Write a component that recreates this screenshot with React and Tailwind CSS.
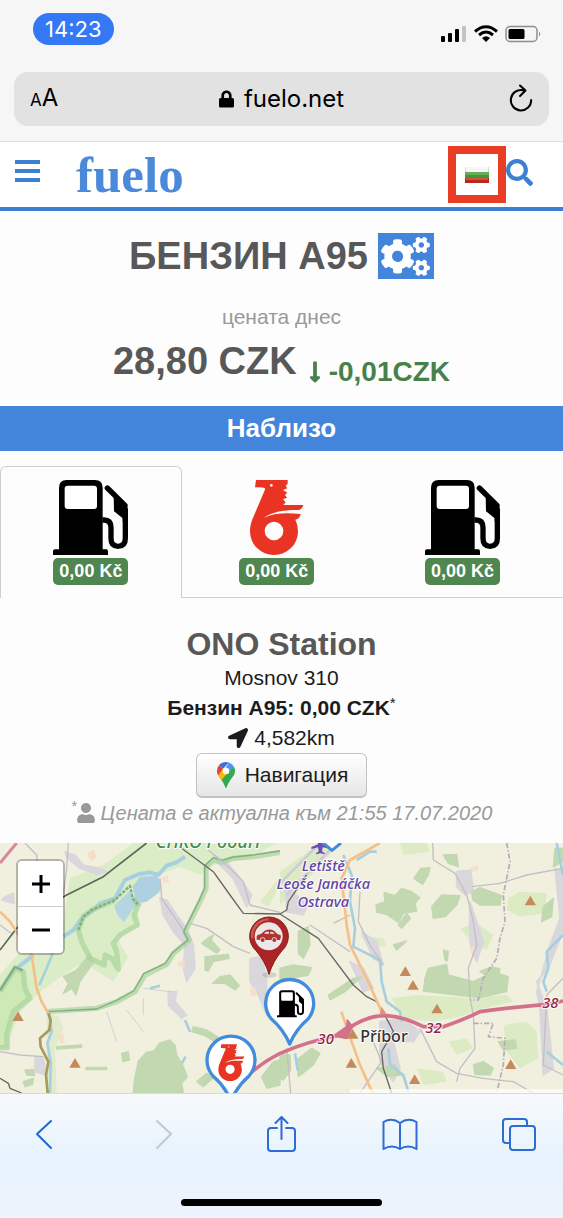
import { FaCogs, FaLocationArrow, FaLock, FaLongArrowAltDown, FaSearch, FaUser } from "react-icons/fa";

const stations = [
  { id: 1, logo: "pump", price: "0,00 Kč" },
  { id: 2, logo: "benzina", price: "0,00 Kč" },
  { id: 3, logo: "pump", price: "0,00 Kč" },
];

const peaks = [
  [54, 545], [225, 685], [1216, 410], [1239, 451], [1311, 522], [1591, 198],
  [1058, 598], [1054, 685], [1244, 734], [1532, 689],
];

const forests = [
  "M400 774L403 735 415 678 440 652 462 648 478 625 510 615 525 630 530 660 548 690 562 725 545 745 550 774Z",
  "M1128 210L1155 200 1152 172 1185 182 1205 160 1235 170 1260 188 1245 205 1250 228 1210 235 1195 262 1160 238 1130 232Z",
  "M1242 130L1262 100 1290 98 1285 120 1268 148Z",
  "M1295 215L1325 180 1380 182 1370 210 1335 245 1300 250Z",
  "M1275 430L1285 400 1340 388 1345 420 1420 440 1480 410 1525 425 1520 470 1440 488 1350 478 1270 468Z",
  "M1415 170L1440 158 1505 182 1500 210 1440 210 1418 195Z",
  "M1195 270L1220 235 1232 250 1205 280Z",
  "M840 400L880 390 935 398 925 420 860 432 840 430Z",
  "M895 290L925 275 930 330 910 370 895 355Z",
  "M1630 215L1660 190 1655 245 1625 260Z",
  "M1330 60L1370 58 1375 95 1345 85Z",
  "M890 675L935 640 960 655 940 690 895 725Z",
  "M840 655L870 660 872 705 850 735 840 730Z",
  "M1420 690L1450 680 1480 700 1470 720 1425 718Z",
  "M1130 700L1185 690 1205 720 1160 724Z",
  "M1495 620L1545 615 1550 640 1510 645Z",
  "M785 725L820 680 840 675 840 750 800 760Z",
  "M190 475L205 445 190 425 230 405 270 355 282 380 240 440 228 480 215 460Z",
  "M615 365L685 358 688 370 640 380 625 408 615 405Z",
  "M638 445L660 425 690 420 718 452 705 465 675 445Z",
  "M605 325L625 308 640 300 634 315 660 345 650 355Z",
  "M365 655L385 650 388 675 368 680Z",
  "M75 705L100 703 105 722 80 720ZM70 740L100 730 98 748 75 755Z",
  "M580 575L620 585 660 610 650 622 610 600 575 590Z",
  "M640 655L680 640 650 680ZM590 740L620 715 640 728 610 755Z",
  "M258 697L320 697 320 704 258 704ZM170 635L245 630 245 637 170 642Z",
  "M1665 40L1689 40 1689 80 1660 95Z",
  "M1440 410L1475 395 1500 402 1490 440Z",
  "M985 480L1060 430 1085 425 1035 470 990 495Z",
  "M1180 330L1220 318 1190 345ZM1330 345L1345 350 1342 378 1335 375Z",
];

const meadows = [
  "M1175 490L1250 480 1400 488 1520 480 1540 500 1450 520 1380 545 1300 560 1210 550Z",
  "M1525 190L1560 170 1640 175 1635 235 1560 245 1520 225Z",
  "M1510 570L1580 560 1610 590 1615 670 1560 700 1520 650Z",
  "M1380 280L1430 265 1480 300 1460 345 1420 330Z",
  "M1200 24L1280 24 1290 50 1210 60Z",
  "M1080 300L1150 310 1160 335 1100 330Z",
  "M780 200L840 125 840 150 805 215Z",
  "M1250 700L1330 710 1340 740 1270 750Z",
  "M1345 620L1400 610 1420 640 1370 660Z",
  "M840 110L960 24 1020 24 900 160 840 210Z",
];

const towns = [
  "M195 50L225 60 250 90 300 100 320 110 290 118 240 100 200 68Z",
  "M480 190L500 195 530 240 560 280 580 330 585 400 560 440 550 400 555 330 520 290 490 240Z",
  "M505 470L530 470 525 500 560 540 545 550 505 510Z",
  "M640 60L680 80 720 130 755 180 740 215 700 130 660 90Z",
  "M750 370L785 365 800 430 800 540 775 480 750 440Z",
  "M855 150L900 190 930 190 910 240 860 230Z",
  "M1370 110L1412 105 1420 170 1395 180 1370 155Z",
  "M1410 200L1430 260 1450 320 1430 380 1412 340 1408 270Z",
  "M1665 100L1689 110 1689 290 1645 400 1610 440 1640 520 1660 700 1630 720 1620 520 1610 470 1650 330 1680 250Z",
  "M1140 560L1210 550 1260 590 1240 620 1180 620 1200 700 1180 740 1140 680Z",
  "M1085 290L1130 320 1150 390 1120 370Z",
  "M1050 380L1090 400 1120 460 1090 470Z",
  "M15 185L40 175 42 205 5 195ZM105 665L130 670 140 720 105 710Z",
];

const Pump = () => (
  <>
    <path d="M162 300V288Q162 283 168 283H180V98Q180 75 203 75H288Q311 75 311 98V283H322Q327 283 327 290V300Z" />
    <rect x="197" y="92" width="97" height="70" rx="9" fill="#fff" />
    <path d="M310 195H315Q336 195 336 218V250Q336 274 357 274Q379 274 379 250V165" fill="none" stroke="#000" strokeWidth="16" />
    <path d="M325 99L378 151" stroke="#000" strokeWidth="16" strokeLinecap="round" />
    <path d="M344 118L379 147Q387 153 387 162V200H371V190L345 169Z" />
  </>
);

const Rooster = () => (
  <>
    <path
      fillRule="evenodd"
      d="M768 75H863V86L857 92 862 100 849 105 862 113 855 120 861 128 849 133 857 142 850 150H910Q907 162 897 165C855 164 815 170 791 189C820 174 858 173 902 177Q899 192 886 194Q894 209 894 229A72 71 0 0 1 750 229Q750 207 761 184L796 101Q790 96 765 97ZM794 228A28 28 0 1 0 850 228A28 28 0 1 0 794 228Z"
      fill="#e93323"
    />
    <circle cx="814" cy="91" r="4" fill="#fff" />
  </>
);

const StationLogo = ({ type }) =>
  type === "pump" ? (
    <svg viewBox="162 75 225 225" className="h-[75px] w-[75px]" aria-hidden="true">
      <Pump />
    </svg>
  ) : (
    <svg viewBox="717 75 225 225" className="h-[75px] w-[75px]" aria-hidden="true">
      <Rooster />
    </svg>
  );

const StatusBar = () => (
  <div className="flex h-[58px] items-start justify-between pl-[33px] pr-[21px] pt-[13px]">
    <span className="rounded-full bg-[#3478f6] px-3 text-[22px] leading-8 text-white">14:23</span>
    <svg viewBox="0 0 101 20" className="mt-3 h-5 w-[101px]" aria-hidden="true">
      <rect x="0" y="11" width="4" height="6" rx="1" />
      <rect x="7" y="8" width="4" height="9" rx="1" />
      <rect x="14" y="4" width="4" height="13" rx="1" />
      <rect x="21" y="1" width="4" height="16" rx="1" fill="#c4c4c4" />
      <path d="M34 6.500Q45 -3 56 6.500M38 10Q45 4 52 10" fill="none" stroke="#000" strokeWidth="3" />
      <path d="M41 13Q45 9.500 49 13L45 17Z" />
      <rect x="65" y="1.500" width="31" height="15" rx="4" fill="none" stroke="#8d8d8d" strokeWidth="1.500" />
      <rect x="67.500" y="4" width="16" height="10" rx="1.500" />
      <path d="M98 6.500Q100.500 9 98 11.500Z" fill="#8d8d8d" />
    </svg>
  </div>
);

const AddressBar = () => (
  <div className="mx-[14px] mt-[14px] flex h-[54px] items-center justify-between rounded-[14px] bg-[#e2e2e3] px-4">
    <button type="button" aria-label="Text size" className="w-8 text-left leading-8">
      <span className="text-[17px]">A</span>
      <span className="text-[24px]">A</span>
    </button>
    <div className="flex items-center gap-[10px] text-[24px] leading-8">
      <FaLock className="h-5 w-[15px]" />
      <span>fuelo.net</span>
    </div>
    <button type="button" aria-label="Reload" className="flex w-8 justify-end">
      <svg viewBox="0 0 24 30" className="h-[30px] w-6" fill="none" stroke="#000" strokeWidth="2" strokeLinecap="round" strokeLinejoin="round">
        <path d="M14 6.200A10.200 10.200 0 1 0 22.200 16M11 1.500L16.500 6.500 11 12" />
      </svg>
    </button>
  </div>
);

const Header = () => (
  <header className="flex h-[69px] items-center border-b-4 border-[#3f7fd2] bg-white pl-[15px] pr-[30px]">
    <button type="button" aria-label="Menu" className="mb-2 flex w-[25px] flex-col gap-[5px]">
      <span className="h-1 bg-[#3d7fd0]" />
      <span className="h-1 bg-[#3d7fd0]" />
      <span className="h-1 bg-[#3d7fd0]" />
    </button>
    <a href="#home" className="ml-9 font-['Liberation_Serif',serif] text-[51px] font-bold leading-[60px] text-[#4a8ad8]">
      fuelo
    </a>
    <button type="button" aria-label="Език" className="ml-auto flex h-[57px] w-[58px] items-center justify-center border-8 border-[#e93e25]">
      <svg viewBox="0 0 24 16" className="h-4 w-6" aria-hidden="true">
        <rect width="24" height="16" fill="#d8d8d8" />
        <rect x="1" width="22" height="6" fill="#f7f7f7" />
        <rect y="5" width="24" height="6" fill="#3f9a35" />
        <rect y="5" width="24" height="3" fill="#64ae58" />
        <rect y="11" width="24" height="5" fill="#b5281d" />
        <rect x="1" y="11" width="22" height="2" fill="#d65042" />
      </svg>
    </button>
    <button type="button" aria-label="Търсене" className="mb-1 text-[#3d7fd0]">
      <FaSearch className="h-[27px] w-[27px]" />
    </button>
  </header>
);

const FuelPrice = () => (
  <section className="flex flex-col items-center bg-[#fdfdfd] pb-[14px] pt-[22px] text-[#585858]">
    <div className="flex items-center gap-[10px]">
      <h1 className="text-[38px] font-bold leading-[46px]">БЕНЗИН А95</h1>
      <button type="button" aria-label="Настройки" className="flex h-[46px] w-14 items-center justify-center bg-[#4285db] text-white">
        <FaCogs className="h-[39px] w-[49px]" />
      </button>
    </div>
    <p className="mt-[23px] text-[21px] leading-[30px] text-[#999]">цената днес</p>
    <p className="mt-[6px] flex items-end gap-3 font-bold">
      <span className="pb-2 text-[38px] leading-[46px]">28,80 CZK</span>
      <span className="flex items-center gap-2 text-[28px] leading-[40px] text-[#47804a]">
        <FaLongArrowAltDown className="h-6 w-3" />
        -0,01CZK
      </span>
    </p>
  </section>
);

const StationTabs = () => (
  <div role="tablist" className="mt-[15px] flex">
    {stations.map((station, index) => (
      <div key={station.id} className="flex w-[33%]">
        <button
          type="button"
          role="tab"
          aria-selected={index === 0}
          className={
            index === 0
              ? "flex h-[132px] grow flex-col items-center rounded-t-md border border-b-0 border-[#cfcfd1] pt-[13px]"
              : "flex h-[132px] grow flex-col items-center border-b border-[#cfcfd1] pt-[14px]"
          }
        >
          <StationLogo type={station.logo} />
          <span className="mt-[3px] rounded-[5px] bg-[#50864f] px-[6px] text-[18px] font-bold leading-[27px] text-white">
            {station.price}
          </span>
        </button>
        <div className="w-1 border-b border-[#cfcfd1]" />
      </div>
    ))}
    <div className="grow border-b border-[#cfcfd1]" />
  </div>
);

const StationDetails = () => (
  <section className="flex flex-col items-center pt-[27px] text-[21px] leading-[30px] text-[#1c1c1c]">
    <h2 className="text-[32px] font-bold leading-[38px] text-[#585858]">ONO Station</h2>
    <p>Mosnov 310</p>
    <p className="font-bold">
      Бензин A95: 0,00 CZK<sup className="text-[15px] font-normal leading-none">*</sup>
    </p>
    <p className="flex items-center gap-[6px]">
      <FaLocationArrow className="h-5 w-5" />
      4,582km
    </p>
    <button
      type="button"
      className="flex h-[45px] items-center gap-2 rounded-md border border-b-2 border-[#c2c2c2] bg-linear-to-b from-white to-[#e6e6e6] px-[18px]"
    >
      <svg viewBox="0 0 18 26" className="mx-[2px] h-[26px] w-[18px]" aria-hidden="true">
        <path d="M9 0Q4.700 0 2 3.200L6.300 6.800 11.800.500Q10.500 0 9 0Z" fill="#3f6fd8" />
        <path d="M2 3.200Q0 5.600 0 9Q0 11.500 1.200 13.700L6.300 6.800Z" fill="#e54335" />
        <path d="M11.800.500L9 5.500 12 11 16.800 4.500Q15.200 1.700 11.800.500Z" fill="#4e93f5" />
        <path d="M1.200 13.700Q2.200 15.600 4.300 18L12 11 6.300 7Z" fill="#fabb05" />
        <path d="M16.800 4.500Q18 6.500 18 9C18 14.500 12.500 17 9.800 25Q9 27 8.200 25Q7 21 4.300 18Z" fill="#36a852" />
        <circle cx="9" cy="9" r="3.300" fill="#fff" />
      </svg>
      Навигация
    </button>
    <p className="flex items-center text-[20px] italic text-[#999]">
      <sup className="text-[15px] leading-none">*</sup>
      <FaUser className="mr-[6px] h-5 w-[18px]" />
      Цената е актуална към 21:55 17.07.2020
    </p>
  </section>
);

// Drawn at three units per pixel; the origin is 24 units down.
const StationMap = () => (
  <div className="relative mt-[15px] h-[250px] overflow-hidden bg-[#f1f0df]">
    <svg
      viewBox="0 24 1689 750"
      preserveAspectRatio="xMidYMin slice"
      className="h-full w-full font-['Noto_Sans',sans-serif]"
      role="img"
      aria-label="Příbor"
      fill="none"
      strokeLinejoin="round"
    >
      <path d="M0 24H1689V774H0Z" fill="#f1f0df" />
      <path d="M0 420L60 350 130 330 190 260 210 130 310 90 400 24H830L760 65 640 90 600 120 540 95 470 120 490 160 410 220 420 270 350 310 385 365 340 440 250 380 190 420 120 470 90 500 60 530 20 640 0 640Z" fill="#daedc6" />
      <path d="M140 530L175 545 190 580 165 640 170 774H140Z" fill="#e0ebcc" />
      {meadows.map((d) => (
        <path key={d} d={d} fill="#dcebc4" />
      ))}
      {towns.map((d) => (
        <path key={d} d={d} fill="#d9d7dc" stroke="#d9d7dc" strokeWidth="5" />
      ))}
      {forests.map((d) => (
        <path key={d} d={d} fill="#c1d8b0" stroke="#c1d8b0" strokeWidth="4" />
      ))}
      <g fill="#f4dfc8">
        <path d="M262 55l20-12 8 25-18 10zM485 130l18-10 5 20-18 5zM535 380l20-2-2 20-18-4zM175 600l15-5 4 28-14 4zM1410 98l25-8v16l-20 5zM1410 335l14-3v18l-12 4zM750 460l15-5 8 25-18 6z" />
      </g>

      {/* water */}
      <path d="M398 155L420 125 470 122 484 140 478 172 440 200 408 205Z" fill="#aed0e0" />
      <path d="M342 212L388 168 400 195 425 210 400 220 372 262 352 240Z" fill="#b4d6e0" />
      <g stroke="#a7cfdf" strokeWidth="8">
        <path d="M0 470L28 430 40 410 65 388 100 360M190 305L220 285 245 250 275 230 300 205 345 190 375 135 415 118 450 112 475 120 500 92 530 82 555 65" strokeWidth="12" />
        <path d="M158 355L140 400 118 450M146 530L155 590 142 625 152 680 150 774M450 460l30-8M555 555l15 35M545 685l12-20" />
        <path d="M1030 60L1055 120 1050 200 1065 280 1060 335 1100 355 1140 375 1145 440 1160 500 1200 530 1205 560M1165 640L1170 690 1210 720 1225 770M885 655l8 50" />
        <path d="M1670 24L1689 120M1689 300L1640 350 1645 400 1630 440 1640 470M1640 650L1689 690" />
        <path d="M1070 75l40-25 20 0" />
      </g>

      {/* protected area borders */}
      <g stroke="#a9d39b" strokeWidth="16" strokeOpacity=".7">
        <path d="M398 190L415 210 402 240 412 270 385 285 360 300 340 325 350 350 355 402 335 370 315 360 313 390 270 370 245 320 235 285 250 245 275 225 345 195" />
        <path d="M840 52L760 65 700 70 665 82 640 75 618 95 618 160 600 200 555 290 568 315 520 355 500 388 435 420 405 470 350 500 290 520 140 530" />
        <path d="M0 470L45 400 70 410 75 460 90 490 40 530 20 600 22 638 0 638" fill="#cfe9b6" />
      </g>
      <g stroke="#7fae86" strokeWidth="4">
        <path d="M235 285L250 245 275 225 345 195 390 152 398 190 415 210" strokeDasharray="10 4" strokeWidth="7" />
        <path d="M840 48L760 60 700 66 665 76 640 68 614 92 614 160 596 200 551 290 564 315 516 355 496 385 431 416 401 468 350 496 290 522 140 530" />
        <path d="M0 466L45 396 68 406" strokeWidth="7" />
      </g>

      {/* minor roads */}
      <g stroke="#c3bfc7" strokeWidth="4">
        <path d="M75 24L110 60 112 80M205 24L200 100 190 180M480 130L485 190 550 285M570 265L620 280 700 335 750 355M625 45L690 100 730 140 750 210 840 232M0 270L40 300M0 650L60 660 130 665" />
        <path d="M430 490L430 540M320 530L350 620M380 525L430 590M430 460L510 470" strokeWidth="2" />
        <path d="M1298 24L1300 75 1365 115 1400 180 1420 260 1430 330 1405 400 1410 490 1420 540 1425 640 1380 700 1370 740M1415 155L1500 145 1580 120 1689 100M1080 170L1075 260 1110 330 1150 390M1260 580L1310 680 1370 715 1450 730 1540 740 1600 774M930 270L1050 350M1000 265L1050 240M1120 620L1145 680 1080 774M860 640L872 774M1689 430L1640 480 1630 690 1689 720" />
      </g>
      <path d="M840 145L960 24M860 180L1010 24" stroke="#cfcbdc" strokeWidth="8" />
      <path d="M1520 24L1530 80 1510 180 1515 260 1500 310 1490 370 1450 430 1435 495 1410 495M1420 565H1480L1465 605 1515 610 1510 690 1490 774" stroke="#b9a9b6" strokeWidth="5" strokeDasharray="16 6 4 6" />

      {/* railways */}
      <g stroke="#666" strokeWidth="4">
        <path d="M0 345L50 280 110 230 200 180 310 125 440 24" stroke="#59675a" strokeWidth="5" />
        <path d="M545 40L640 110 690 180 730 235 840 237L955 310 1060 450 1100 485 1130 500 1165 560 1180 590 1145 650 1150 700 1175 774M840 237L860 225 865 200 920 120M0 730L25 745 30 760 65 774" />
      </g>

      {/* main roads */}
      <path d="M0 230L30 260 50 290 95 360 110 460 125 500 145 535M1140 24L1050 75 1025 130 1040 270 1050 330 1100 430 1145 530M1024 530L1055 620 1080 690 1118 774" stroke="#f5c088" strokeWidth="8" />
      <path d="M145 535L152 555 148 585 120 610 122 635 145 680 138 720 143 774" stroke="#a69b5a" strokeWidth="8" />
      <path d="M0 84L50 24" stroke="#d9879a" strokeWidth="9" />
      <path d="M690 774Q760 695 840 655Q920 620 1020 600Q1090 540 1160 542Q1210 545 1270 575H1330Q1390 555 1440 530Q1550 515 1640 508L1689 498" stroke="#d4718a" strokeWidth="11" />
      <path d="M1000 603L1040 575 1042 555 1058 575 1050 590 1040 610Z" fill="#d4718a" stroke="#d4718a" strokeWidth="5" />
      <path d="M1138 540L1145 515 1160 538Z" fill="#e09080" />
      {peaks.map(([x, y]) => (
        <path key={x} d={`M${x} ${y - 16}l17 29h-34z`} fill="#c58a59" />
      ))}

      {/* labels */}
      <g stroke="#fff" strokeWidth="7" strokeOpacity=".8" paintOrder="stroke" textAnchor="middle" fontWeight="500">
        <g fontSize="44" fontStyle="italic" fill="#6243a8">
          <text x="970" y="108">Letiště</text>
          <text x="970" y="162">Leoše Janáčka</text>
          <text x="970" y="216">Ostrava</text>
        </g>
        <text x="624" y="40" fontSize="54" fontStyle="italic" fill="#468a4e">CHKO Poodří</text>
        <text x="1152" y="621" fontSize="48" fill="#333">Příbor</text>
        <g fontSize="44" fontStyle="italic" fill="#8f2348">
          <text x="977" y="626">30</text>
          <text x="1301" y="593">32</text>
          <text x="1651" y="520">38</text>
        </g>
      </g>
      <path d="M954 24h14v14l24 8v6l-24-5-2 12 8 6v3l-13-3-13 3v-3l8-6-2-12-20 5v-6l20-8z" fill="#6c4eb2" transform="translate(0 -10)" />
      <path d="M970 24L996 46 1023 24" fill="#fff" stroke="#438bdc" strokeWidth="9" />

      {/* pins */}
      <ellipse cx="808" cy="420" rx="22" ry="8" fill="#777" fillOpacity=".25" />
      <path d="M807 418Q795 378 768 347A58 58 0 1 1 846 347Q819 378 807 418Z" fill="#aa2525" stroke="#8b1c1c" strokeWidth="3" />
      <path d="M757 310A50 50 0 0 1 806 253" stroke="#c75b52" strokeWidth="7" />
      <circle cx="806" cy="304" r="42" fill="#ece8e8" />
      <path d="M770 314V303Q773 298 783 297L794 287Q810 280 823 288L832 297Q843 299 843 304L840 315H831A8 8 0 0 0 815 315H796A8 8 0 0 0 780 315Z" fill="#b23330" />
      <path d="M792 296L798 290H807V296ZM811 290Q819 289 824 296H811Z" fill="#ece8e8" />
      <circle cx="788" cy="315" r="6" fill="#b23330" />
      <circle cx="823" cy="315" r="6" fill="#b23330" />
      <path id="pin" d="M869 627Q850 583 815 553A72 72 0 1 1 923 553Q888 583 869 627Z" fill="#fff" stroke="#438bdc" strokeWidth="10" />
      <g transform="translate(831 466) scale(.36) translate(-162 -75)" fill="#000">
        <Pump />
      </g>
      <use href="#pin" x="-176" y="170" />
      <g transform="translate(655 628) scale(.49) translate(-750 -75)">
        <Rooster />
      </g>
      <path d="M1050 762H1689V774H1050Z" fill="#fff" fillOpacity=".7" />
    </svg>
    <div className="absolute left-4 top-4 flex w-[49px] flex-col overflow-hidden rounded-md border-2 border-black/25 bg-clip-padding">
      <button type="button" aria-label="Zoom in" className="flex h-[46px] items-center justify-center border-b border-[#ccc] bg-white">
        <svg viewBox="0 0 18 18" className="h-[18px] w-[18px]" stroke="#000" strokeWidth="3">
          <path d="M9 0V18M0 9H18" />
        </svg>
      </button>
      <button type="button" aria-label="Zoom out" className="flex h-[46px] items-center justify-center bg-white">
        <svg viewBox="0 0 18 18" className="h-[18px] w-[18px]" stroke="#000" strokeWidth="3">
          <path d="M0 9H18" />
        </svg>
      </button>
    </div>
  </div>
);

const toolbar = [
  { label: "Back", color: "text-[#2467d0]", d: "M25 5L11 18 25 32" },
  { label: "Forward", color: "text-[#c3c8cf]", d: "M12 5L26 18 12 32" },
  { label: "Share", color: "text-[#2c6cd4]", d: "M13 12H7Q4 12 4 15V32Q4 35 7 35H28Q31 35 31 32V15Q31 12 28 12H22M17.500 23V1M11.500 7L17.500 1 23.500 7" },
  { label: "Bookmarks", color: "text-[#2c6cd4]", d: "M18 7Q10 1 1.500 6V33Q10 28 18 33Q26 28 34.500 33V6Q26 1 18 7V33" },
  { label: "Tabs", color: "text-[#2c6cd4]", d: "M9 27H5Q2 27 2 24V6Q2 3 5 3H23Q26 3 26 6V10M12 10H31Q34 10 34 13V31Q34 34 31 34H12Q9 34 9 31V13Q9 10 12 10Z" },
];

const Toolbar = () => (
  <nav className="flex grow flex-col items-center border-t border-[#d5dbe0] bg-linear-to-b from-[#f7f9fb] via-[#e8f3fe] to-[#edf3fc] pb-3">
    <div className="flex w-full justify-between px-[26px] pt-[22px]">
      {toolbar.map((item) => (
        <button key={item.label} type="button" aria-label={item.label} className={item.color}>
          <svg viewBox="0 0 36 36" className="h-9 w-9" fill="none" stroke="currentColor" strokeWidth="2" strokeLinejoin="round" strokeLinecap="round">
            <path d={item.d} />
          </svg>
        </button>
      ))}
    </div>
    <div className="mt-[47px] h-[7px] w-[201px] rounded-full bg-black" />
  </nav>
);

const App = () => {
  return (
    <div className="flex min-h-screen flex-col bg-[#fdfdfd] font-['Liberation_Sans',sans-serif] text-black">
      <div className="border-b border-[#dedede] bg-[#f6f6f7] pb-[15px] font-['Inter',sans-serif]">
        <StatusBar />
        <AddressBar />
      </div>
      <Header />
      <main>
        <FuelPrice />
        <h2 className="bg-[#4285db] text-center text-[26px] font-bold leading-[45px] text-white">Наблизо</h2>
        <StationTabs />
        <StationDetails />
        <StationMap />
      </main>
      <Toolbar />
    </div>
  );
};

export default App;
